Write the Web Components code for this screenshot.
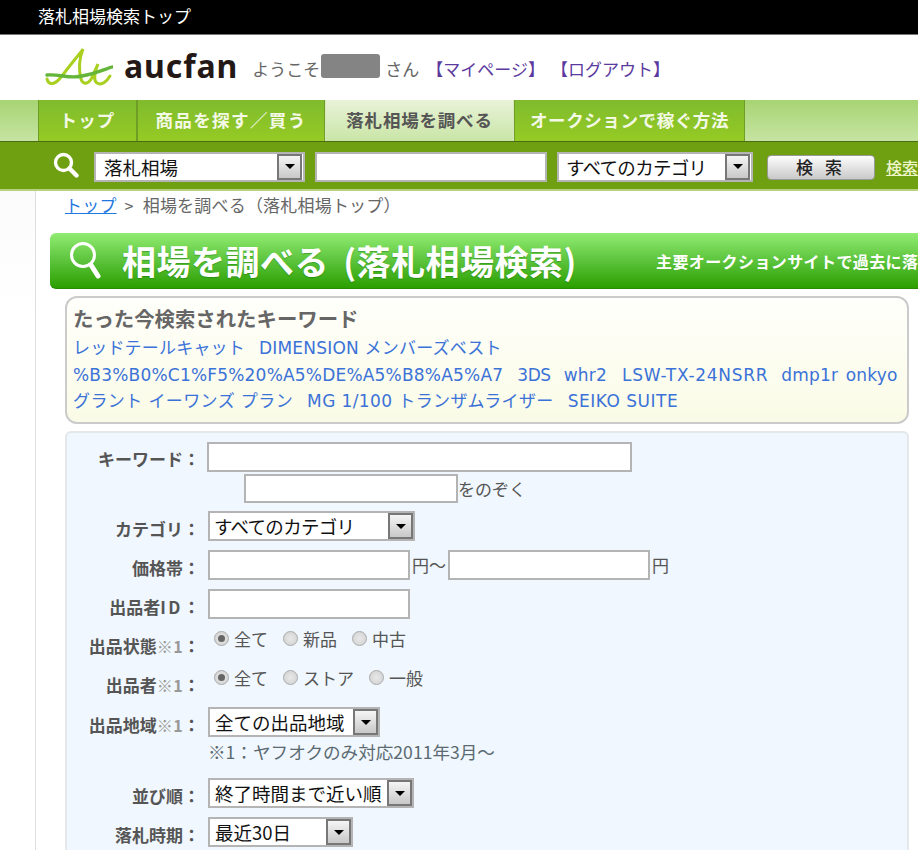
<!DOCTYPE html>
<html lang="ja">
<head>
<meta charset="utf-8">
<title>落札相場検索トップ</title>
<style>
  html, body { margin: 0; height: 850px; overflow: hidden; background: #fff; }
  body { font: 16px "DejaVu Sans", "Noto Sans CJK JP", sans-serif; color: #555; }
</style>
</head>
<body>
<auc-topbar>落札相場検索トップ</auc-topbar>
<auc-header></auc-header>
<auc-nav></auc-nav>
<auc-searchbar></auc-searchbar>
<auc-page>
  <auc-breadcrumb></auc-breadcrumb>
  <auc-title></auc-title>
  <auc-keywords></auc-keywords>
  <auc-form></auc-form>
</auc-page>

<script>
const JP = '"Noto Sans CJK JP", sans-serif';

class AucElement extends HTMLElement {
  connectedCallback () {
    if (this.shadowRoot) return;
    this.attachShadow({ mode: 'open' });
    this.shadowRoot.innerHTML = this.render();
  }
}

customElements.define('auc-topbar', class extends AucElement {
  render () {
    return `<style>
      :host { display: block; height: 34px; background: #000; border-bottom: 1px solid #777; color: #fff;
        font: 17px/31px ${JP}; padding-left: 38px; }
    </style><slot></slot>`;
  }
});

customElements.define('auc-header', class extends AucElement {
  render () {
    return `<style>
      :host { display: flex; align-items: center; height: 65px; padding-left: 45px; font: 17px ${JP}; color: #666; }
      svg { flex: none; display: block; }
      .brand { font: bold 32px/1 "Noto Sans", sans-serif; color: #231815; letter-spacing: .9px; margin: 0 14px 3px 11px; }
      .name { width: 59px; height: 24px; background: #848484; border-radius: 3px; margin: 0 5px 3px 1px; }
      .t { margin-top: 2px; }
      a { color: #5b3aa0; text-decoration: none; margin-top: 2px; }
      .mine { margin-left: 7px; }
      .out { margin-left: 6px; }
    </style>
    <svg width="68" height="40" viewBox="45 47 68 40" fill="none" stroke-linecap="round">
      <path d="M47 78 C49 85 55 84 62 75 C70 64 78 55 83 48 C79 58 79 70 81 78 C83 85 90 83 93 74 C95 69 97 66 98 63 C95 70 93 79 97 82 C102 85 107 80 110 75" stroke="#a9cf1f" stroke-width="3"/>
      <path d="M47 74 C60 73 70 78 82 75 C93 73 103 69 112 66" stroke="#64b53a" stroke-width="3.4"/>
    </svg>
    <span class="brand">aucfan</span>
    <span class="t">ようこそ</span><span class="name"></span><span class="t">さん</span>
    <a class="mine">【マイページ】</a><a class="out">【ログアウト】</a>`;
  }
});

customElements.define('auc-nav', class extends AucElement {
  render () {
    const tabs = [['トップ', 99, 1.2], ['商品を探す／買う', 188, 1.4], ['落札相場を調べる', 189, .8, 1], ['オークションで稼ぐ方法', 231, .6]];
    return `<style>
      :host { display: flex; height: 41px; padding-left: 38px; border-bottom: 1px solid #4d6b12;
        background: linear-gradient(#a7d473, #c6e4a2); font: bold 17.5px/40px ${JP}; }
      div { text-align: center; color: #f4f9e6; background: linear-gradient(#7fbb2e, #95cb24);
        border-left: 1px solid #6f9e26; border-right: 1px solid #6f9e26; box-sizing: border-box; }
      div.on { color: #555; background: linear-gradient(#e9f3d8, #c9e5a6); border-color: #d7e8bc; }
    </style>` + tabs.map(([t, w, ls, on]) => `<div class="${on ? 'on' : ''}" style="width:${w}px;letter-spacing:${ls}px">${t}</div>`).join('');
  }
});

customElements.define('auc-select', class extends AucElement {
  render () {
    return `<style>
      :host { display: inline-flex; box-sizing: border-box; height: 30px; background: #fff; border: 2px solid #b4b4b4;
        align-items: stretch; font: 18.5px/26px ${JP}; color: #111; flex: none; }
      .v { flex: 1; padding-left: 5px; white-space: nowrap; overflow: hidden; }
      .b { flex: none; width: 25px; box-sizing: border-box; border: 2px solid #777; background: linear-gradient(#f5f5f5, #c8c8c8);
        display: flex; align-items: center; justify-content: center; }
      :host([inset]) .v { padding-left: 8px; }
      :host([inset]) .b { margin: 0 1px 0 0; height: 26px; }
      .b i { border: 5px solid transparent; border-top: 5px solid #000; border-bottom: 0; }
      :host([kana]) .v { letter-spacing: -.7px; padding-left: 4px; }
      :host([kana][inset]) .v { padding-left: 7px; }
    </style><div class="v"><slot></slot></div><div class="b"><i></i></div>`;
  }
});

customElements.define('auc-input', class extends AucElement {
  render () {
    return `<style>
      :host { display: block; box-sizing: border-box; height: 30px; background: #fff; border: 2px solid #b4b4b4; flex: none; }
    </style>`;
  }
});

customElements.define('auc-radio', class extends AucElement {
  render () {
    return `<style>
      :host { display: inline-flex; align-items: center; font: 17px/20px ${JP}; color: #555; }
      i { width: 15px; height: 15px; box-sizing: border-box; border-radius: 50%; border: 1px solid #aaa; margin-right: 5px;
        background: radial-gradient(circle, #e8e8e8, #d0d0d0); display: flex; align-items: center; justify-content: center; position: relative; top: -1px; }
      :host([checked]) i::after { content: ""; width: 7px; height: 7px; border-radius: 50%; background: #666; }
    </style><i></i><slot></slot>`;
  }
});

customElements.define('auc-searchbar', class extends AucElement {
  render () {
    return `<style>
      :host { display: flex; align-items: center; height: 49px; box-sizing: border-box; background: #6fa011; border-bottom: 2px solid #b6d27c;
        padding: 2px 0 0 53px; overflow: hidden; }
      .lens { color: #fff; margin-right: 15px; line-height: 0; margin-top: -4px; }
      svg { display: block; }
      .btn { flex: none; box-sizing: border-box; width: 108px; height: 25px; margin: 1px 11px 0 14px; border: 1px solid #999; border-radius: 4px;
        background: linear-gradient(#fdfdfd, #c9c9c9); font: 500 17px/22px ${JP}; color: #222; text-align: center; letter-spacing: 4px; }
      a { font: 500 16px ${JP}; color: #eef5c9; text-decoration: underline; white-space: nowrap; }
    </style>
    <div class="lens"><svg width="26" height="26" viewBox="0 0 26 26" fill="none" stroke="#fff" stroke-linecap="round"><circle cx="10.5" cy="10.5" r="8" stroke-width="3.4"/><path d="M16.5 16.5 L23.5 23.5" stroke-width="4.4"/></svg></div>
    <auc-select inset style="width:211px">落札相場</auc-select>
    <auc-input style="width:232px;margin:1px 0 0 10px"></auc-input>
    <auc-select inset kana style="width:196px;margin-left:10px">すべてのカテゴリ</auc-select>
    <div class="btn">検 索</div>
    <a>検索</a>`;
  }
});

customElements.define('auc-page', class extends AucElement {
  render () {
    return `<style>
      :host { display: block; height: 660px; padding-left: 36px; box-sizing: border-box;
        background: linear-gradient(#fbfbfb, #fff 120px) no-repeat 0 0 / 35px 100%; }
      .main { border-left: 1px solid #dedede; margin-left: -1px; height: 100%; box-sizing: border-box; overflow: hidden; padding-left: 14px; }
    </style><div class="main"><slot></slot></div>`;
  }
});

customElements.define('auc-breadcrumb', class extends AucElement {
  render () {
    return `<style>
      :host { display: block; height: 42px; padding: 1px 0 0 15px; box-sizing: border-box; font: 17px/26px ${JP}; color: #666; white-space: nowrap; letter-spacing: .2px; }
      a { color: #1f78e0; text-decoration: underline; }
      span { margin: 0 9px 0 8px; font-size: 16px; }
    </style><a>トップ</a><span>&gt;</span>相場を調べる（落札相場トップ）`;
  }
});

customElements.define('auc-title', class extends AucElement {
  render () {
    return `<style>
      :host { display: flex; align-items: center; height: 56px; width: 868px; box-sizing: border-box; border-radius: 6px 0 0 6px; color: #fff;
        background: linear-gradient(#92ec72, #5cc43c 50%, #2b9f00); border-bottom: 1px solid #2a8a00; padding-left: 20px; white-space: nowrap; overflow: hidden; }
      svg { display: block; flex: none; margin-right: 20px; }
      h1 { margin: 0; font: bold 34px/1 ${JP}; width: 534px; flex: none; text-shadow: 0 1px 1px rgba(0, 90, 0, .35); letter-spacing: .5px; word-spacing: 6px; }
      p { margin: 0; font: bold 16px/1 ${JP}; letter-spacing: .4px; }
    </style>
    <svg width="32" height="40" viewBox="0 0 32 40" fill="none" stroke="#fff" stroke-linecap="round"><circle cx="13" cy="14" r="11.5" stroke-width="3"/><path d="M21 24 L28 35" stroke-width="5"/></svg>
    <h1>相場を調べる (落札相場検索)</h1><p>主要オークションサイトで過去に落</p>`;
  }
});

customElements.define('auc-keywords', class extends AucElement {
  render () {
    const a = (t, s = '') => `<a style="${s}">${t}</a>`;
    return `<style>
      :host { display: block; box-sizing: border-box; width: 844px; height: 128px; margin: 7px 0 0 15px; padding: 5px 0 0 6px;
        border: 2px solid #cbcbcb; border-radius: 12px; background: linear-gradient(#fffffb, #fafbe6); white-space: nowrap; }
      h2 { margin: 0 0 2px; font: bold 20.4px/30px ${JP}; color: #666; }
      div { font: 17px/26.5px "DejaVu Sans", ${JP}; letter-spacing: .2px; }
      a { color: #3b72d8; margin-right: 14px; }
    </style>
    <h2>たった今検索されたキーワード</h2>
    <div>${a('レッドテールキャット')}${a('DIMENSION メンバーズベスト')}</div>
    <div>${a('%B3%B0%C1%F5%20%A5%DE%A5%B8%A5%A7')}${a('3DS', 'letter-spacing:-.4px;margin-right:13px')}${a('whr2', 'margin-right:15px')}${a('LSW-TX-24NSRR', 'letter-spacing:.7px;margin-right:13px')}${a('dmp1r onkyo', 'word-spacing:2px')}</div>
    <div>${a('グラント イーワンズ プラン', 'letter-spacing:.4px')}${a('MG 1/100 トランザムライザー', 'letter-spacing:.4px')}${a('SEIKO SUITE', 'letter-spacing:.5px')}</div>`;
  }
});

customElements.define('auc-form', class extends AucElement {
  render () {
    return `<style>
      :host { display: block; box-sizing: border-box; width: 844px; height: 430px; margin: 7px 0 0 15px; padding: 9px 0 0 0;
        border: 2px solid #e4e8ea; border-bottom: 0; border-radius: 6px 6px 0 0; background: #f0f7fe;
        font: 17px/20px ${JP}; color: #555; }
      .row { display: grid; grid-template-columns: 133px 1fr; column-gap: 8px; align-items: center; height: 38px; margin-top: 1px; }
      label { text-align: right; font: bold 17px/20px ${JP}; color: #555; white-space: nowrap; padding-top: 5px; }
      label small { font: bold 16px ${JP}; color: #999; letter-spacing: .4px; }
      .id { letter-spacing: 2.5px; }
      .yen { margin: 0 2px; letter-spacing: 0; }
      .f { display: flex; align-items: center; white-space: nowrap; }
      .r { gap: 15px; margin: -8px 0 0 6px; }
      .note { font-size: 17.6px; color: #5a6a70; }
    </style>
    <div class="row" style="height:30px;margin-top:0"><label style="padding-top:4px">キーワード：</label><div class="f" style="margin-left:-1px"><auc-input style="width:425px"></auc-input></div></div>
    <div class="row" style="height:31px"><span></span><div class="f" style="margin-left:36px"><auc-input style="width:214px;height:29px"></auc-input>をのぞく</div></div>
    <div class="row" style="margin-top:3px"><label>カテゴリ：</label><div class="f"><auc-select kana style="width:207px">すべてのカテゴリ</auc-select></div></div>
    <div class="row"><label>価格帯：</label><div class="f"><auc-input style="width:202px"></auc-input><span class="yen">円～</span><auc-input style="width:202px"></auc-input><span class="yen">円</span></div></div>
    <div class="row"><label>出品者<span class="id">ID</span>：</label><div class="f"><auc-input style="width:202px"></auc-input></div></div>
    <div class="row"><label>出品状態<small>※1</small>：</label><div class="f r"><auc-radio checked>全て</auc-radio><auc-radio>新品</auc-radio><auc-radio>中古</auc-radio></div></div>
    <div class="row"><label>出品者<small>※1</small>：</label><div class="f r"><auc-radio checked>全て</auc-radio><auc-radio>ストア</auc-radio><auc-radio>一般</auc-radio></div></div>
    <div class="row" style="margin-top:2px"><label>出品地域<small>※1</small>：</label><div class="f"><auc-select style="width:172px">全ての出品地域</auc-select></div></div>
    <div class="row" style="height:16px"><span></span><div class="f note">※1：ヤフオクのみ対応2011年3月～</div></div>
    <div class="row" style="margin-top:16px"><label>並び順：</label><div class="f"><auc-select style="width:206px">終了時間まで近い順</auc-select></div></div>
    <div class="row"><label>落札時期：</label><div class="f"><auc-select style="width:145px">最近30日</auc-select></div></div>`;
  }
});
</script>
</body>
</html>
